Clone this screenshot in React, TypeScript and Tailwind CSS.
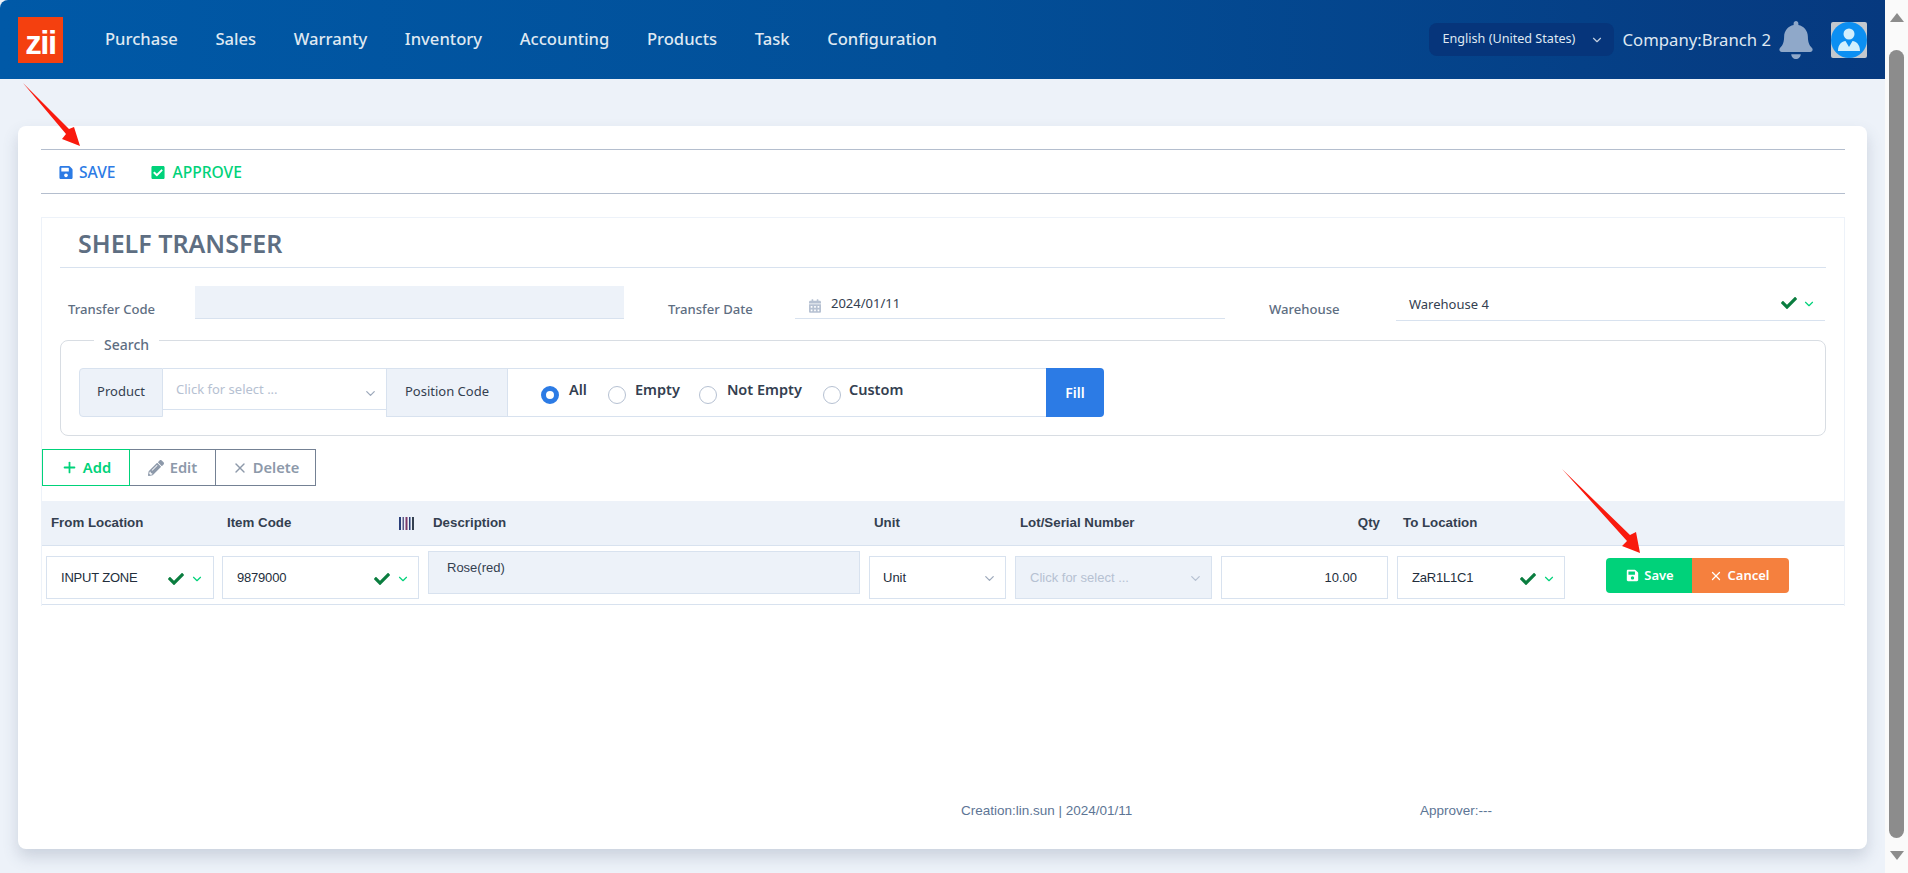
import { ChevronDown, Plus, X } from "lucide-react";
import { FaSave, FaCheckSquare, FaPencilAlt, FaBell, FaCalendarAlt, FaCheck } from "react-icons/fa";
import type { ReactNode } from "react";

function Chev({ className }: { className: string }) {
  return <ChevronDown className={className} strokeWidth={2} />;
}

function Radio({ label, on, left, gap }: { label: string; on?: boolean; left: string; gap: string }) {
  return (
    <div className={`flex items-start ${left}`}>
      <span className={`mt-[17px] box-border h-[18px] w-[18px] shrink-0 rounded-full ${on ? "border-[5px] border-[#2c7be5] bg-white" : "border border-[#b6c1d2] bg-white"}`} />
      <span className={`${gap} mt-[9px] text-[14.5px] leading-[22px] font-semibold text-[#344050]`}>{label}</span>
    </div>
  );
}

function SelectCell({ text, extra }: { text: string; extra: string }) {
  return (
    <div className={`box-border flex h-[43px] items-center border border-[#d8e2ef] bg-white pt-[1px] ${extra}`}>
      <span className="font-[Liberation_Sans,Arial,sans-serif] text-[13px] tracking-[-0.2px] text-[#232e3c]">{text}</span>
    </div>
  );
}

function Mark() {
  return (
    <div className="pointer-events-none flex items-center">
      <FaCheck className="h-[16px] w-[18px] text-[#0a7d3f]" />
      <Chev className="ml-[5px] h-[14px] w-[14px] text-[#00d27a]" />
    </div>
  );
}

const cols = "grid grid-cols-[176px_206px_441px_146px_206px_176px_177px_1fr]";

function Head({ children, className }: { children: ReactNode; className: string }) {
  return <div className={`font-[Liberation_Sans,Arial,sans-serif] text-[13.3px] font-bold text-[#344050] ${className}`}>{children}</div>;
}

export default function App() {
  return (
    <div className="relative flex h-[873px] w-[1908px] overflow-hidden bg-white font-[Noto_Sans,sans-serif]">
      <div className="flex h-full w-[1885px] flex-col bg-[#edf2f9]">
        {/* Header */}
        <header className="flex h-[79px] shrink-0 items-center rounded-tl-lg bg-gradient-to-r from-[#0059a7] via-[#024f98] to-[#06397f] pl-[18px] pr-[18px]">
          <div className="flex h-[46px] w-[45px] shrink-0 items-end justify-center bg-[#f4400f] pb-[2px]">
            <span className="font-[Liberation_Sans,Arial,sans-serif] text-[33px] leading-[36px] font-bold tracking-[-1.5px] text-white">zii</span>
          </div>
          <nav className="ml-[42px] flex gap-[37.6px] text-[16.6px] font-medium text-[#dfe8f2]">
            <span>Purchase</span>
            <span>Sales</span>
            <span>Warranty</span>
            <span>Inventory</span>
            <span>Accounting</span>
            <span>Products</span>
            <span>Task</span>
            <span>Configuration</span>
          </nav>
          <div className="ml-auto flex items-center">
            <div className="flex h-[33px] w-[185px] items-center justify-between rounded-lg bg-[#06357b] pl-[14px] pr-[10px] text-[12.6px] text-[#dfe8f2]">
              <span>English (United States)</span>
              <Chev className="h-[14px] w-[14px] text-[#c3cfe0]" />
            </div>
            <span className="ml-[9px] text-[16.7px] text-[#dfe8f2]">Company:Branch 2</span>
            <FaBell className="ml-[8px] h-[38px] w-[34px] text-[#8fa8c9]" />
            <svg className="ml-[18px] h-[36px] w-[36px]" viewBox="0 0 36 36">
              <rect width="36" height="36" rx="2" fill="#c3c8ce" />
              <circle cx="18" cy="18" r="18" fill="#0c8ff2" />
              <circle cx="18" cy="12" r="5.5" fill="#d2effd" />
              <path d="M7 29 C7 22 11 19.5 14.5 19 L18 25 L21.5 19 C25 19.5 29 22 29 29 Z" fill="#d2effd" />
            </svg>
          </div>
        </header>

        {/* Content */}
        <main className="px-[18px] pt-[47px]">
          <div className="h-[723px] rounded-lg bg-white pl-[23px] pr-[22px] pt-[23px] shadow-[0_8px_16px_rgba(65,80,110,0.2)]">
            <div className="flex h-[45px] items-center gap-[14px] border-y border-[#b4bece] pl-[18px] pt-[2px] text-[15.6px] font-medium">
              <span className="flex items-center gap-[6px] text-[#2c7be5]">
                <FaSave className="h-[15px] w-[14px]" />
                SAVE
              </span>
              <span className="ml-[22px] flex items-center gap-[7px] text-[#00d27a]">
                <FaCheckSquare className="h-[15px] w-[14px]" />
                APPROVE
              </span>
            </div>

            <section className="mt-[23px] h-[389px] border border-b-0 border-[#edf2f9]">
              <div className="mx-[18px] flex h-[50px] items-center border-b border-[#d8e2ef] pl-[18px]">
                <h1 className="pt-[2px] text-[25px] font-semibold text-[#5e6e82]">SHELF TRANSFER</h1>
              </div>

              <div className="mx-[18px] mt-[18px] flex h-[33px] items-start text-[13.1px] font-medium text-[#5e6e82]">
                <span className="mt-[14px] w-[135px] pl-[8px] leading-[18px]">Transfer Code</span>
                <div className="box-border h-[33px] w-[429px] border-b border-[#d8e2ef] bg-[#edf2f9]" />
                <span className="ml-[44px] mt-[14px] w-[127px] leading-[18px]">Transfer Date</span>
                <div className="box-border flex h-[33px] w-[430px] items-start border-b border-[#d8e2ef] pl-[14px]">
                  <FaCalendarAlt className="mt-[13px] h-[14px] w-[12px] text-[#b6c1d2]" />
                  <span className="ml-[10px] mt-[7px] text-[13px] font-normal leading-[20px] text-[#344050]">2024/01/11</span>
                </div>
                <span className="ml-[44px] mt-[14px] w-[127px] leading-[18px]">Warehouse</span>
                <div className="box-border flex h-[35px] w-[429px] items-start border-b border-[#d8e2ef] pl-[13px] pr-[9px]">
                  <span className="mt-[8px] text-[13px] font-normal leading-[20px] text-[#344050]">Warehouse 4</span>
                  <FaCheck className="ml-auto mt-[9px] h-[16px] w-[18px] text-[#0a7d3f]" />
                  <Chev className="ml-[4px] mt-[11px] h-[14px] w-[14px] text-[#00d27a]" />
                </div>
              </div>

              <div className="relative mx-[18px] mt-[21px] box-border h-[96px] rounded-lg border border-[#d8dde3] pl-[18px] pt-[27px]">
                <span className="absolute -top-[7px] left-[33px] bg-white px-[10px] text-[14px] leading-[22px] font-medium text-[#5e6e82]">Search</span>
                <div className="flex h-[49px] w-[1025px]">
                  <div className="box-border flex h-[49px] w-[84px] items-center justify-center rounded-l border border-[#d8e2ef] bg-[#edf2f9] pb-[2px] text-[13px] text-[#344050]">Product</div>
                  <div className="box-border flex h-[42px] w-[223px] items-start border-b border-t border-[#d8e2ef] pl-[13px] pr-[8px]">
                    <span className="mt-[10px] text-[13px] leading-[20px] text-[#b6c1d2]">Click for select ...</span>
                    <Chev className="ml-auto mt-[17px] h-[15px] w-[15px] text-[#9da9bb]" />
                  </div>
                  <div className="box-border flex h-[49px] w-[122px] items-center justify-center border border-[#d8e2ef] bg-[#edf2f9] pb-[2px] text-[13px] text-[#344050]">Position Code</div>
                  <div className="box-border flex h-[49px] w-[538px] items-start border-y border-[#d8e2ef]">
                    <Radio label="All" on left="ml-[33px]" gap="ml-[10px]" />
                    <Radio label="Empty" left="ml-[21px]" gap="ml-[9px]" />
                    <Radio label="Not Empty" left="ml-[19px]" gap="ml-[10px]" />
                    <Radio label="Custom" left="ml-[21px]" gap="ml-[8px]" />
                  </div>
                  <button className="h-[49px] w-[58px] rounded-r bg-[#2c7be5] text-[14px] font-semibold text-white">Fill</button>
                </div>
              </div>

              <div className="mt-[13px] flex h-[37px] text-[14.7px] font-semibold">
                <button className="box-border flex w-[88px] items-center justify-center gap-[5px] border border-[#00d27a] text-[#00d27a]">
                  <Plus className="h-[17px] w-[17px]" strokeWidth={2.5} />
                  Add
                </button>
                <button className="box-border flex w-[86px] items-center justify-center gap-[6px] border border-l-0 border-[#748194] text-[#8d99aa]">
                  <FaPencilAlt className="h-[16px] w-[16px]" />
                  Edit
                </button>
                <button className="box-border flex w-[100px] items-center justify-center gap-[5px] border border-l-0 border-[#748194] text-[#8d99aa]">
                  <X className="h-[16px] w-[16px]" strokeWidth={2} />
                  Delete
                </button>
              </div>

              <div className={`${cols} mt-[15px] h-[45px] items-center border-b border-[#d8e2ef] bg-[#edf2f9]`}>
                <Head className="pl-[9px]">From Location</Head>
                <Head className="flex items-center justify-between pl-[9px] pr-[10px]">
                  Item Code
                  <svg className="h-[13px] w-[15px]" viewBox="0 0 15 13">
                    <rect x="0" width="2" height="13" fill="#2a3f7a" />
                    <rect x="3.5" width="1.5" height="13" fill="#5a5a8a" />
                    <rect x="6.5" width="2" height="13" fill="#7c3a6a" />
                    <rect x="10" width="1.5" height="13" fill="#2a3f7a" />
                    <rect x="13" width="2" height="13" fill="#344050" />
                  </svg>
                </Head>
                <Head className="pl-[9px]">Description</Head>
                <Head className="pl-[9px]">Unit</Head>
                <Head className="pl-[9px]">Lot/Serial Number</Head>
                <Head className="pr-[13px] text-right">Qty</Head>
                <Head className="pl-[10px]">To Location</Head>
                <div />
              </div>

              <div className={`${cols} h-[59px] border-b border-[#d8e2ef]`}>
                <div className="relative pl-[4px] pr-[4px] pt-[10px]">
                  <SelectCell text="INPUT ZONE" extra="pl-[14px]" />
                  <div className="absolute right-[14px] top-[25px]"><Mark /></div>
                </div>
                <div className="relative pl-[4px] pr-[5px] pt-[10px]">
                  <SelectCell text="9879000" extra="pl-[14px]" />
                  <div className="absolute right-[14px] top-[25px]"><Mark /></div>
                </div>
                <div className="pl-[4px] pr-[5px] pt-[5px]">
                  <div className="box-border h-[43px] border border-[#d8e2ef] bg-[#edf2f9] pl-[18px] pt-[2px]">
                    <span className="font-[Liberation_Sans,Arial,sans-serif] text-[13px] text-[#344050]">Rose(red)</span>
                  </div>
                </div>
                <div className="pl-[4px] pr-[5px] pt-[10px]">
                  <div className="box-border flex h-[43px] items-center justify-between border border-[#d8e2ef] bg-white pl-[13px] pr-[8px] pt-[1px]">
                    <span className="font-[Liberation_Sans,Arial,sans-serif] text-[13px] text-[#232e3c]">Unit</span>
                    <Chev className="h-[15px] w-[15px] text-[#9da9bb]" />
                  </div>
                </div>
                <div className="pl-[4px] pr-[5px] pt-[10px]">
                  <div className="box-border flex h-[43px] items-center justify-between border border-[#d8e2ef] bg-[#edf2f9] pl-[14px] pr-[8px] pt-[1px]">
                    <span className="font-[Liberation_Sans,Arial,sans-serif] text-[13px] text-[#b6c1d2]">Click for select ...</span>
                    <Chev className="h-[15px] w-[15px] text-[#b6c1d2]" />
                  </div>
                </div>
                <div className="pl-[4px] pr-[5px] pt-[10px]">
                  <div className="box-border flex h-[43px] items-center justify-end border border-[#d8e2ef] bg-white pr-[30px] pt-[1px]">
                    <span className="font-[Liberation_Sans,Arial,sans-serif] text-[13px] text-[#232e3c]">10.00</span>
                  </div>
                </div>
                <div className="relative pl-[4px] pr-[5px] pt-[10px]">
                  <SelectCell text="ZaR1L1C1" extra="pl-[14px]" />
                  <div className="absolute right-[14px] top-[25px]"><Mark /></div>
                </div>
                <div className="pl-[36px] pt-[12px]">
                  <div className="flex h-[35px] w-[183px] text-[13px] font-semibold text-white">
                    <button className="flex w-[86px] items-center justify-center gap-[5px] rounded-l bg-[#00d27a] pl-[2px]">
                      <FaSave className="h-[13px] w-[13px]" />
                      Save
                    </button>
                    <button className="flex w-[97px] items-center justify-center gap-[4px] rounded-r bg-[#f5803e] pr-[2px]">
                      <X className="h-[14px] w-[14px]" strokeWidth={2.25} />
                      Cancel
                    </button>
                  </div>
                </div>
              </div>
            </section>

            <div className="mt-[197px] flex font-[Liberation_Sans,Arial,sans-serif] text-[13.5px] leading-[16px] text-[#5d7595]">
              <span className="ml-[920px] w-[459px]">Creation:lin.sun | 2024/01/11</span>
              <span>Approver:---</span>
            </div>
          </div>
        </main>
      </div>

      {/* Browser scrollbar */}
      <div className="flex w-[23px] flex-col items-center bg-[#fafafa] pt-[13px]">
        <svg className="h-[9px] w-[14px]" viewBox="0 0 14 9"><path d="M7 0 L14 9 H0 Z" fill="#8c8c8c" /></svg>
        <div className="mt-[28px] h-[788px] w-[15px] rounded-full bg-[#8c8c8c]" />
        <svg className="mt-[13px] h-[9px] w-[14px]" viewBox="0 0 14 9"><path d="M0 0 H14 L7 9 Z" fill="#8c8c8c" /></svg>
      </div>

      {/* Red annotation arrows */}
      <svg className="pointer-events-none absolute left-0 top-0 h-[873px] w-[1908px]" viewBox="0 0 1908 873">
        <polygon points="23,83 69,129 74,127 80,146 62,139 66,134" fill="#f91a0e" />
        <polygon points="1562,469 1630,535 1636,532 1640,553 1622,546 1627,541" fill="#f91a0e" />
      </svg>
    </div>
  );
}
